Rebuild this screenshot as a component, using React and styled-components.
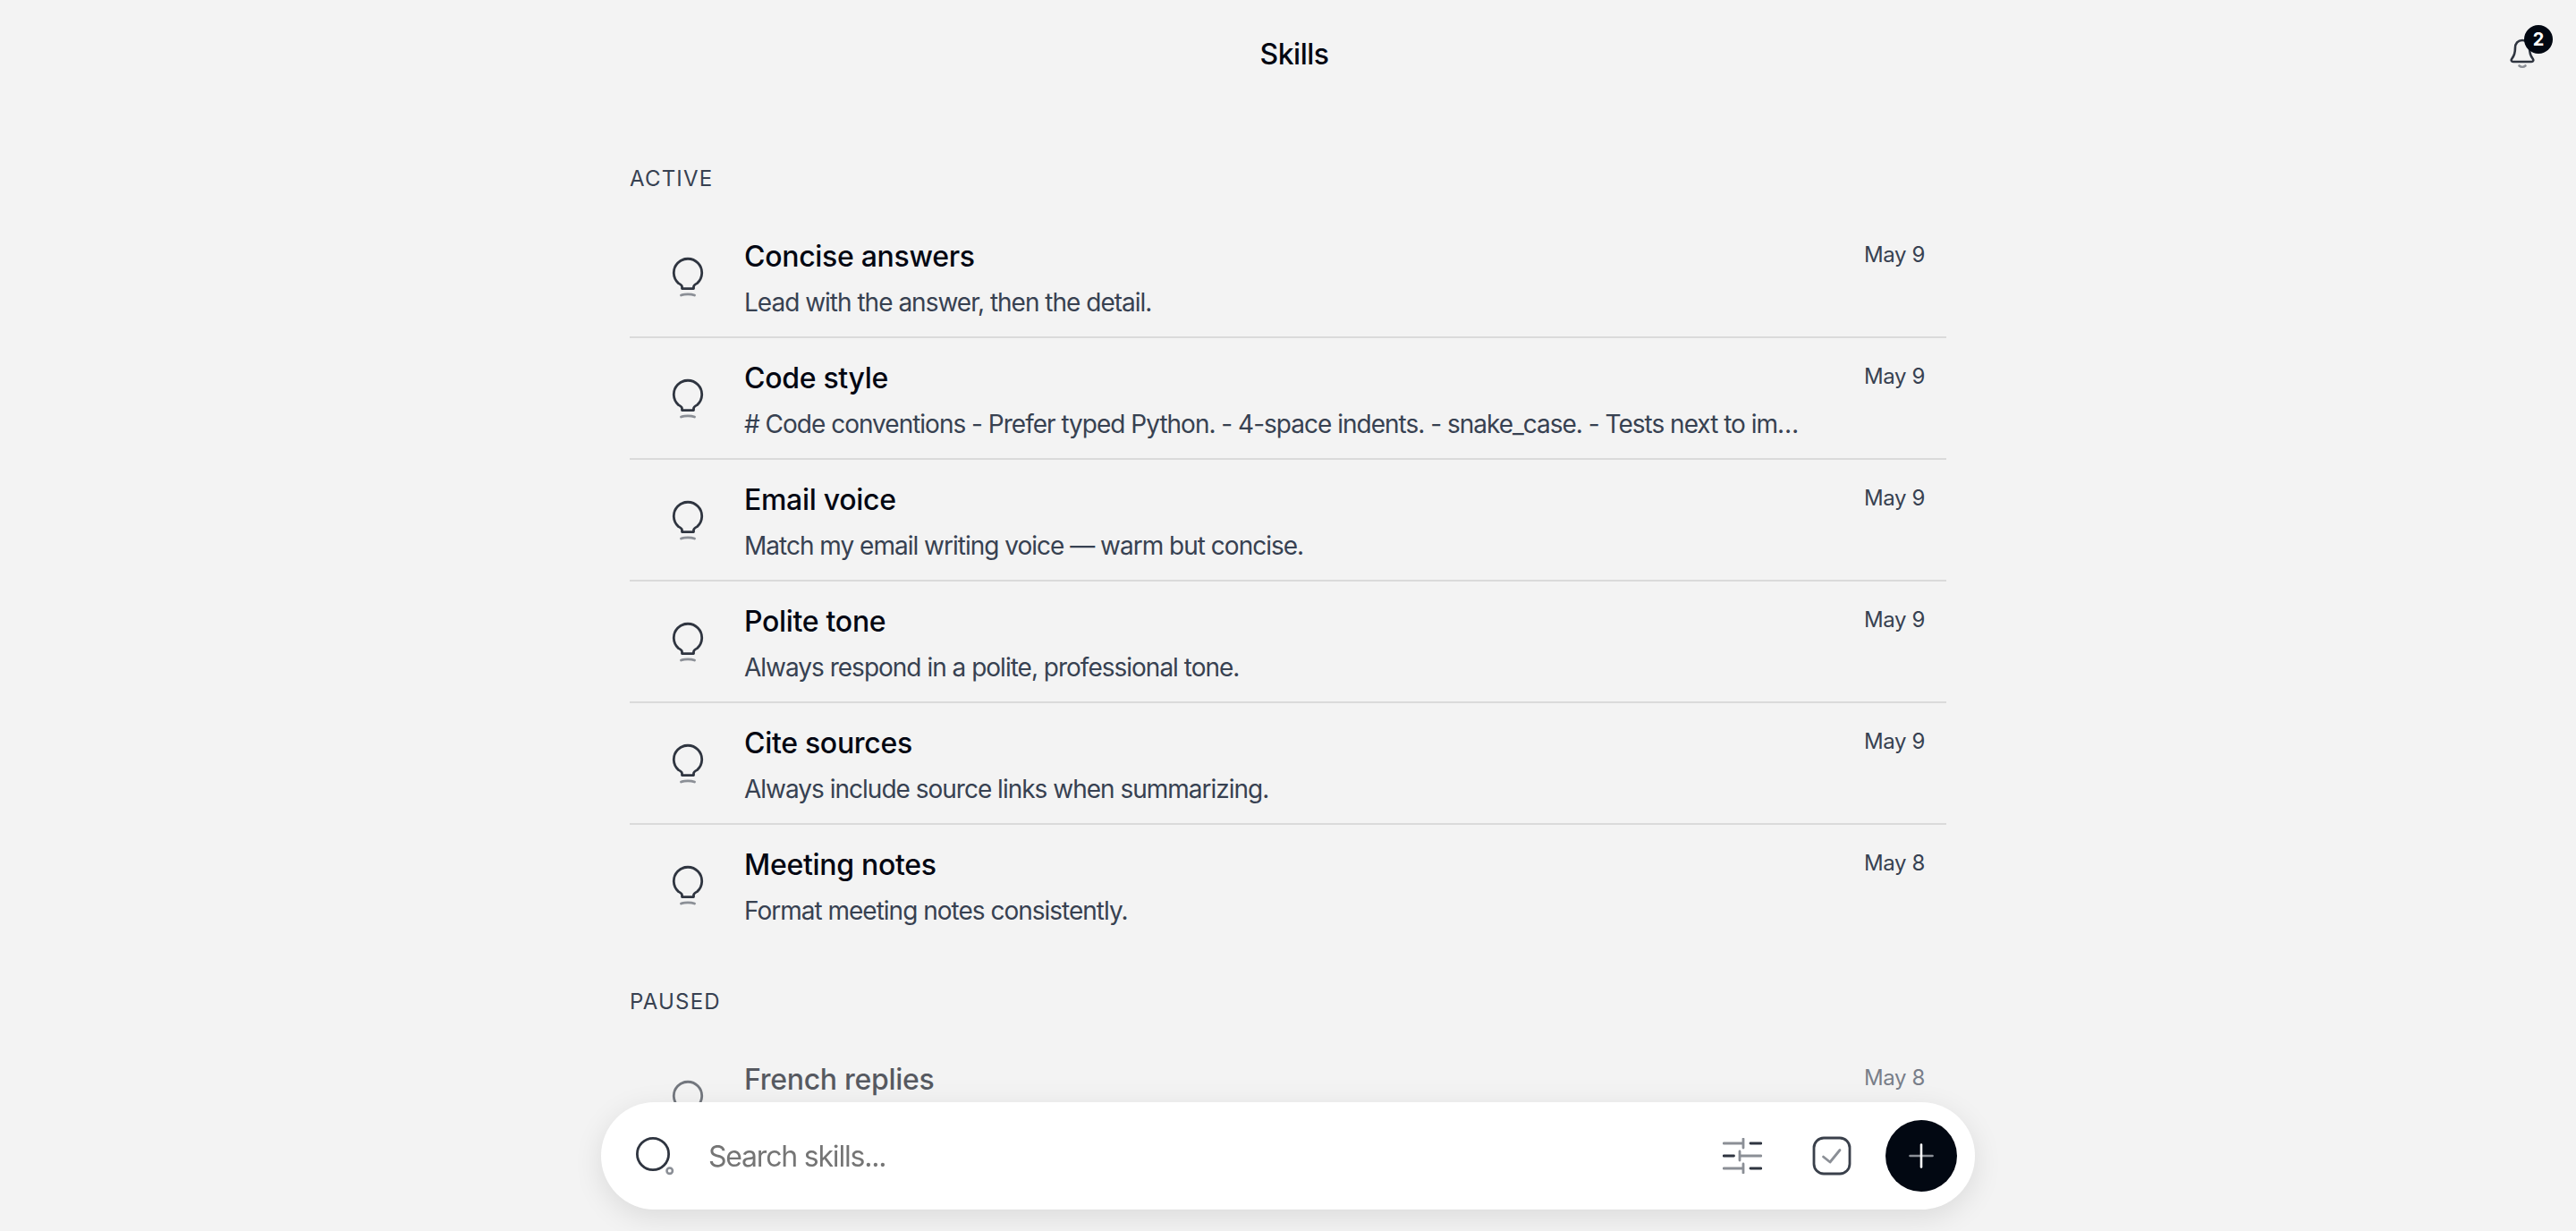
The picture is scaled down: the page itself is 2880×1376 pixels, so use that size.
import React from "react";
import styled, { createGlobalStyle } from "styled-components";

const active = [
  ["Concise answers", "Lead with the answer, then the detail.", "May 9"],
  ["Code style", "# Code conventions - Prefer typed Python. - 4-space indents. - snake_case. - Tests next to implementation files.", "May 9"],
  ["Email voice", "Match my email writing voice — warm but concise.", "May 9"],
  ["Polite tone", "Always respond in a polite, professional tone.", "May 9"],
  ["Cite sources", "Always include source links when summarizing.", "May 9"],
  ["Meeting notes", "Format meeting notes consistently.", "May 8"],
];

const paused = [["French replies", "Reply in French when asked.", "May 8"]];

function BulbIcon() {
  return (
    <svg width="48" height="48" viewBox="0 0 48 48" fill="none">
      <path
        d="M17.500 36.600V34.500c0-1.500-1.500-2.500-4-3.900A15.700 15.700 0 1 1 34.500 30.600c-2.500 1.400-4 2.400-4 3.900v2.100z"
        stroke="#2f3540"
        strokeWidth="2.800"
        strokeLinejoin="round"
      />
      <path d="M16.500 44c4-1.600 11-1.600 15 0" stroke="#8b8f96" strokeWidth="2.800" strokeLinecap="round" />
    </svg>
  );
}

function BellIcon() {
  return (
    <svg width="28" height="34" viewBox="0 0 28 34" fill="none">
      <path
        d="M14 2c-5 0-8 3.800-8 8.500 0 6.500-1.200 9-3.600 12-1.300 1.600-.7 3.500 1.500 3.500h20.200c2.200 0 2.800-1.900 1.500-3.500-2.400-3-3.600-5.500-3.600-12C22 5.800 19 2 14 2z"
        stroke="#2f3540"
        strokeWidth="2.600"
        strokeLinejoin="round"
      />
      <path d="M10.500 30.500c2 1.700 5 1.700 7 0" stroke="#8b8f96" strokeWidth="2.600" strokeLinecap="round" />
    </svg>
  );
}

function SearchIcon() {
  return (
    <svg width="46" height="46" viewBox="0 0 46 46" fill="none">
      <circle cx="19" cy="21" r="17.600" stroke="#2f3540" strokeWidth="2.800" />
      <circle cx="37.700" cy="39.700" r="3.200" stroke="#8b8f96" strokeWidth="2.600" />
    </svg>
  );
}

function SlidersIcon() {
  return (
    <svg width="44" height="40" viewBox="0 0 44 40" fill="none" strokeWidth="2.800" strokeLinecap="round">
      <path d="M1 6h22M23 1v10M1 34h22M23 29v10M19 20h24M19 15v10" stroke="#8b8f96" />
      <path d="M31 6h12M31 34h12M1 20h11.500" stroke="#2f3540" />
    </svg>
  );
}

function CheckIcon() {
  return (
    <svg width="44" height="44" viewBox="0 0 44 44" fill="none">
      <rect x="2" y="2" width="40" height="40" rx="11" stroke="#3a404b" strokeWidth="2.800" />
      <path d="M12.500 23l7.500 6L31 15.500" stroke="#8b8f96" strokeWidth="2.800" strokeLinecap="round" strokeLinejoin="round" />
    </svg>
  );
}

function PlusIcon() {
  return (
    <svg width="28" height="28" viewBox="0 0 28 28" fill="none" strokeWidth="2.600" strokeLinecap="round">
      <path d="M1.500 14h25" stroke="#8b8f96" />
      <path d="M14 1.500v25" stroke="#ffffff" />
    </svg>
  );
}

function SkillRow({ title, desc, date }) {
  return (
    <Row>
      <IconCell>
        <BulbIcon />
      </IconCell>
      <RowText>
        <RowTitle>{title}</RowTitle>
        <RowDesc>{desc}</RowDesc>
      </RowText>
      <RowDate>{date}</RowDate>
    </Row>
  );
}

export default function App() {
  return (
    <>
      <GlobalStyle />
      <Header>
        <Title>Skills</Title>
        <BellButton>
          <BellIcon />
          <Badge>2</Badge>
        </BellButton>
      </Header>
      <Main>
        <section>
          <SectionLabel>ACTIVE</SectionLabel>
          {active.map(([title, desc, date]) => (
            <SkillRow key={title} title={title} desc={desc} date={date} />
          ))}
        </section>
        <section>
          <SectionLabel>PAUSED</SectionLabel>
          <Dimmed>
            {paused.map(([title, desc, date]) => (
              <SkillRow key={title} title={title} desc={desc} date={date} />
            ))}
          </Dimmed>
        </section>
      </Main>
      <SearchBar>
        <SearchIcon />
        <SearchInput placeholder="Search skills..." readOnly />
        <ToolGroup>
          <ToolButton>
            <SlidersIcon />
          </ToolButton>
          <ToolButton>
            <CheckIcon />
          </ToolButton>
          <AddButton>
            <PlusIcon />
          </AddButton>
        </ToolGroup>
      </SearchBar>
    </>
  );
}

const GlobalStyle = createGlobalStyle`
  html, body {
    margin: 0;
    height: 100%;
    overflow: hidden;
    background: #f3f3f3;
    font-family: Inter, "Liberation Sans", sans-serif;
  }
`;

const Header = styled.header`
  display: flex;
  align-items: center;
  justify-content: center;
  height: 120px;
  position: relative;
`;

const Title = styled.h1`
  margin: 0;
  padding-left: 14px;
  font-size: 32px;
  font-weight: 500;
  letter-spacing: -0.5px;
  color: #030712;
`;

const BellButton = styled.div`
  position: absolute;
  right: 48px;
  top: 43px;
  width: 26px;
  height: 34px;
`;

const Badge = styled.span`
  position: absolute;
  left: 16px;
  top: -15px;
  width: 32px;
  height: 32px;
  border-radius: 50%;
  background: #020812;
  color: #fff;
  font-size: 20px;
  font-weight: 700;
  display: flex;
  align-items: center;
  justify-content: center;
`;

const Main = styled.main`
  width: 1472px;
  margin: 0 auto;
  padding-top: 18px;
`;

const SectionLabel = styled.div`
  padding-top: 43px;
  margin-bottom: 23px;
  font-size: 24px;
  line-height: 38px;
  letter-spacing: 1.2px;
  color: #374151;
`;

const Row = styled.div`
  display: flex;
  height: 136px;
  box-sizing: border-box;
  border-bottom: 2px solid #dadada;
  &:last-child {
    border-bottom: 0;
  }
`;

const IconCell = styled.div`
  flex: 0 0 128px;
  display: flex;
  justify-content: center;
  padding: 44px 0 0 2px;
  box-sizing: border-box;
`;

const RowText = styled.div`
  width: 1180px;
  min-width: 0;
  padding-top: 23px;
`;

const RowTitle = styled.div`
  font-size: 32px;
  line-height: 44px;
  font-weight: 500;
  letter-spacing: -0.3px;
  color: #030712;
`;

const RowDesc = styled.div`
  margin-top: 8px;
  font-size: 28px;
  line-height: 42px;
  letter-spacing: -1px;
  color: #374151;
  white-space: nowrap;
  overflow: hidden;
  text-overflow: ellipsis;
`;

const RowDate = styled.div`
  margin-left: auto;
  padding: 27px 24px 0 0;
  font-size: 24px;
  line-height: 32px;
  letter-spacing: -0.4px;
  color: #374151;
`;

const Dimmed = styled.div`
  opacity: 0.65;
`;

const SearchBar = styled.div`
  position: fixed;
  left: 672px;
  top: 1232px;
  width: 1536px;
  height: 120px;
  box-sizing: border-box;
  display: flex;
  align-items: center;
  padding: 0 20px 0 39px;
  background: #fff;
  border-radius: 60px;
  box-shadow: 0 8px 32px rgba(0, 0, 0, 0.1);
`;

const SearchInput = styled.input`
  flex: 1;
  margin-left: 35px;
  padding: 0;
  border: 0;
  outline: 0;
  background: transparent;
  font: 400 32px Inter, "Liberation Sans", sans-serif;
  letter-spacing: -1.2px;
  color: #030712;
  &::placeholder {
    color: #757575;
    opacity: 1;
  }
`;

const ToolGroup = styled.div`
  display: flex;
  align-items: center;
  gap: 56px;
`;

const ToolButton = styled.div`
  display: flex;
`;

const AddButton = styled.div`
  width: 80px;
  height: 80px;
  margin-left: -18px;
  border-radius: 50%;
  background: #020812;
  display: flex;
  align-items: center;
  justify-content: center;
`;
